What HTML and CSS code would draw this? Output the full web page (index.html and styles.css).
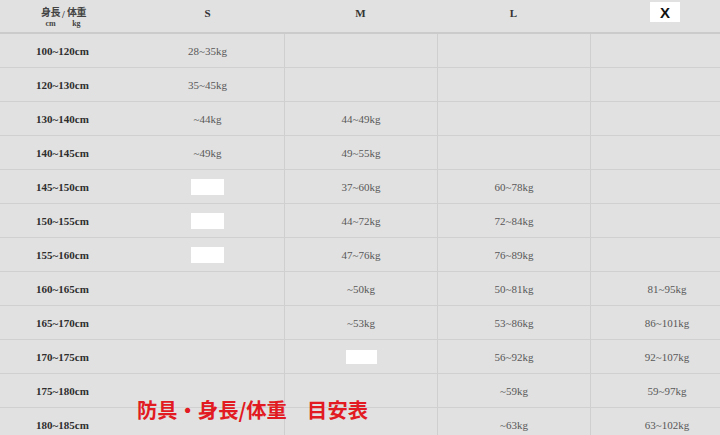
FILE: index.html
```html
<!DOCTYPE html>
<html lang="ja">
<head>
<meta charset="utf-8">
<link rel="stylesheet" href="styles.css">
</head>
<body>
<div class="sheet">
  <div class="table">
    <div class="row head">
      <div class="cell c1">
        <div class="unit">
          <div class="unit-col"><span class="jp">身長</span><span class="en">cm</span></div>
          <span class="slash">/</span>
          <div class="unit-col"><span class="jp">体重</span><span class="en">kg</span></div>
        </div>
      </div>
      <div class="cell hs">S</div>
      <div class="cell hs">M</div>
      <div class="cell hs">L</div>
      <div class="cell hs"><span class="xbox">X</span></div>
    </div>

    <div class="row"><div class="cell c1">100~120cm</div><div class="cell">28~35kg</div><div class="cell v"></div><div class="cell v"></div><div class="cell v"></div></div>
    <div class="row"><div class="cell c1">120~130cm</div><div class="cell">35~45kg</div><div class="cell v"></div><div class="cell v"></div><div class="cell v"></div></div>
    <div class="row"><div class="cell c1">130~140cm</div><div class="cell">~44kg</div><div class="cell v">44~49kg</div><div class="cell v"></div><div class="cell v"></div></div>
    <div class="row"><div class="cell c1">140~145cm</div><div class="cell">~49kg</div><div class="cell v">49~55kg</div><div class="cell v"></div><div class="cell v"></div></div>
    <div class="row"><div class="cell c1">145~150cm</div><div class="cell"><span class="blank"></span></div><div class="cell v">37~60kg</div><div class="cell v">60~78kg</div><div class="cell v"></div></div>
    <div class="row"><div class="cell c1">150~155cm</div><div class="cell"><span class="blank"></span></div><div class="cell v">44~72kg</div><div class="cell v">72~84kg</div><div class="cell v"></div></div>
    <div class="row"><div class="cell c1">155~160cm</div><div class="cell"><span class="blank"></span></div><div class="cell v">47~76kg</div><div class="cell v">76~89kg</div><div class="cell v"></div></div>
    <div class="row"><div class="cell c1">160~165cm</div><div class="cell"></div><div class="cell v">~50kg</div><div class="cell v">50~81kg</div><div class="cell v">81~95kg</div></div>
    <div class="row"><div class="cell c1">165~170cm</div><div class="cell"></div><div class="cell v">~53kg</div><div class="cell v">53~86kg</div><div class="cell v">86~101kg</div></div>
    <div class="row"><div class="cell c1">170~175cm</div><div class="cell"></div><div class="cell v"><span class="blank sm"></span></div><div class="cell v">56~92kg</div><div class="cell v">92~107kg</div></div>
    <div class="row"><div class="cell c1">175~180cm</div><div class="cell"></div><div class="cell v"></div><div class="cell v">~59kg</div><div class="cell v">59~97kg</div></div>
    <div class="row"><div class="cell c1">180~185cm</div><div class="cell"></div><div class="cell v"></div><div class="cell v">~63kg</div><div class="cell v">63~102kg</div></div>
  </div>
  <div class="caption">防具・身長/体重　目安表</div>
</div>
</body>
</html>
```

FILE: styles.css
```css
html, body {
  margin: 0;
  padding: 0;
  background: #e1e1e1;
}
body {
  font-family: "Liberation Serif", "Noto Sans CJK JP", serif;
  color: #555;
  overflow: hidden;
}
.sheet {
  position: relative;
  width: 720px;
  height: 435px;
  overflow: hidden;
}
.table {
  display: flex;
  flex-direction: column;
}
.row {
  display: grid;
  grid-template-columns: 131px 153px 153px 153px 153px;
  height: 34px;
  box-sizing: border-box;
  border-bottom: 1px solid #d0d0d0;
}
.row.head {
  border-bottom: 2px solid #cbcbcb;
}
.cell {
  display: flex;
  align-items: center;
  justify-content: center;
  font-size: 11px;
  color: #585858;
}
.cell.v {
  border-left: 1px solid #cfcfcf;
}
.c1 {
  font-weight: bold;
  color: #2e2e2e;
  padding-right: 6px;
}
.hs {
  font-weight: bold;
  color: #333;
  font-size: 11px;
  padding-bottom: 6px;
}
.unit {
  display: flex;
  align-items: flex-end;
  gap: 2px;
  padding-top: 2px;
  padding-left: 2px;
}
.unit-col {
  display: flex;
  flex-direction: column;
  align-items: center;
  line-height: 1;
}
.jp {
  font-family: "Noto Sans CJK JP", sans-serif;
  font-size: 10px;
  font-weight: bold;
  color: #444;
  letter-spacing: -0.5px;
}
.en {
  font-size: 8px;
  font-weight: bold;
  color: #444;
  margin-top: 3px;
}
.slash {
  font-size: 10px;
  color: #444;
  margin-bottom: 8px;
}
.xbox {
  display: inline-flex;
  align-items: center;
  justify-content: center;
  width: 30px;
  height: 20px;
  background: #fff;
  font-family: "Liberation Sans", sans-serif;
  font-weight: bold;
  font-size: 15px;
  color: #111;
}
.hs:last-child {
  padding-bottom: 8px;
  justify-content: flex-start;
  padding-left: 60px;
}
.blank {
  display: inline-block;
  width: 33px;
  height: 16px;
  background: #fff;
}
.blank.sm {
  width: 31px;
  height: 14px;
}
.caption {
  position: absolute;
  left: 137px;
  top: 396px;
  font-family: "Noto Sans CJK JP", sans-serif;
  font-weight: bold;
  font-size: 20.3px;
  color: #e21a22;
  line-height: 26px;
  white-space: pre;
}
```
